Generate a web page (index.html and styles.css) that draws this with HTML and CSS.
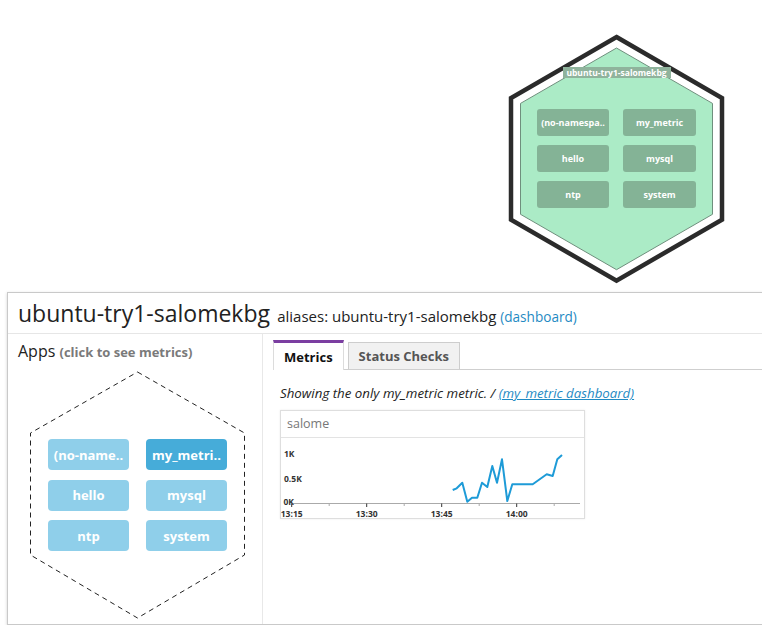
FILE: index.html
```html
<!DOCTYPE html>
<html>
<head>
<meta charset="utf-8">
<link rel="stylesheet" href="styles.css">
</head>
<body>
<div class="top">
  <div class="host">
    <svg class="host-bg" width="217" height="250" viewBox="0 0 217 250">
      <polygon points="108.5,3 214,64 214,185.7 108.5,246.6 3,185.7 3,64" fill="none" stroke="#2b2b2b" stroke-width="4.5"/>
      <polygon points="108.5,14 204.5,69.4 204.5,180.3 108.5,235.7 12.5,180.3 12.5,69.4" fill="#abebc6" stroke="#6f8f7d" stroke-width="1" stroke-linejoin="round"/>
    </svg>
    <div class="host-label">ubuntu-try1-salomekbg</div>
    <div class="host-grid">
      <div class="host-app">(no-namespa..</div>
      <div class="host-app">my_metric</div>
      <div class="host-app">hello</div>
      <div class="host-app">mysql</div>
      <div class="host-app">ntp</div>
      <div class="host-app">system</div>
    </div>
  </div>
</div>

<div class="panel">
  <div class="panel-head">
    <span class="title">ubuntu-try1-salomekbg</span>
    <span class="aliases">aliases: ubuntu-try1-salomekbg <a class="link" href="#">(dashboard)</a></span>
  </div>
  <div class="panel-body">
    <div class="left">
      <div class="apps-title">Apps <span class="hint">(click to see metrics)</span></div>
      <div class="apps-hex">
        <svg class="apps-bg" width="217" height="250" viewBox="0 0 217 250">
          <polygon points="108.5,2 215.5,63 215.5,185 108.5,248 1.5,185 1.5,63" fill="none" stroke="#222" stroke-width="1" stroke-dasharray="5 4"/>
        </svg>
        <div class="apps-grid">
          <div class="app">(no-name..</div>
          <div class="app selected">my_metri..</div>
          <div class="app">hello</div>
          <div class="app">mysql</div>
          <div class="app">ntp</div>
          <div class="app">system</div>
        </div>
      </div>
    </div>
    <div class="right">
      <div class="tabs">
        <div class="tab active">Metrics</div>
        <div class="tab">Status Checks</div>
      </div>
      <div class="showing">Showing the only my_metric metric. / <a class="link underline" href="#">(my_metric dashboard)</a></div>
      <div class="card">
        <div class="card-head">salome</div>
        <svg class="chart" width="303" height="81" viewBox="281 437 303 81">
          <line x1="293" y1="502.5" x2="580" y2="502.5" stroke="#aaa" stroke-width="1"/>
          <g stroke="#333" stroke-width="1">
            <line x1="291.7" y1="502.5" x2="291.7" y2="506"/>
            <line x1="366.7" y1="502.5" x2="366.7" y2="506"/>
            <line x1="441.7" y1="502.5" x2="441.7" y2="506"/>
            <line x1="516.7" y1="502.5" x2="516.7" y2="506"/>
          </g>
          <g stroke="#aaa" stroke-width="1">
            <line x1="329.2" y1="502.5" x2="329.2" y2="505"/>
            <line x1="404.2" y1="502.5" x2="404.2" y2="505"/>
            <line x1="479.2" y1="502.5" x2="479.2" y2="505"/>
            <line x1="554.2" y1="502.5" x2="554.2" y2="505"/>
          </g>
          <g class="axis-text">
            <text x="284" y="455.5">1K</text>
            <text x="284" y="480.5">0.5K</text>
            <text x="283.5" y="504">0K</text>
            <text x="291.7" y="516" text-anchor="middle">13:15</text>
            <text x="366.7" y="516" text-anchor="middle">13:30</text>
            <text x="441.7" y="516" text-anchor="middle">13:45</text>
            <text x="516.7" y="516" text-anchor="middle">14:00</text>
          </g>
          <polyline fill="none" stroke="#1e9bd7" stroke-width="2" stroke-linejoin="round"
            points="452.7,489 456.7,487.3 462.3,481.7 467.3,500.7 472,496.7 477.3,496.7 482,481.7 487.3,486 492.3,465 497,481.7 502,458.3 507.3,500 512.3,483.3 532.7,483.3 546.7,473.3 552.7,475 557.3,458.3 562,454"/>
        </svg>
      </div>
    </div>
  </div>
</div>
</body>
</html>
```

FILE: styles.css
```css
html, body {
  margin: 0;
  padding: 0;
  background: #fff;
  overflow: hidden;
  font-family: "Open Sans", "DejaVu Sans", sans-serif;
  color: #222;
}

.top {
  height: 292px;
  padding-left: 508px;
  padding-top: 34px;
  box-sizing: border-box;
}

.host {
  position: relative;
  width: 217px;
  height: 250px;
  padding-top: 33px;
  box-sizing: border-box;
  display: flex;
  flex-direction: column;
  align-items: center;
}

.host-bg {
  position: absolute;
  left: 0;
  top: 0;
}

.host-label {
  position: relative;
  height: 11px;
  line-height: 11px;
  width: 108px;
  text-align: center;
  background: #8fb39c;
  color: #fff;
  font-size: 8.5px;
  font-weight: 700;
  white-space: nowrap;
  overflow: hidden;
}

.host-grid {
  position: relative;
  margin-top: 31px;
  display: grid;
  grid-template-columns: 72px 73px;
  grid-auto-rows: 27px;
  column-gap: 14px;
  row-gap: 9px;
}

.host-app {
  background: #84b396;
  border-radius: 3px;
  color: #fff;
  font-size: 9px;
  font-weight: 700;
  display: flex;
  align-items: center;
  justify-content: center;
  white-space: nowrap;
}

.panel {
  margin-left: 7px;
  width: 756px;
  height: 333px;
  border: 1px solid #c9c9c9;
  box-shadow: 0 1px 3px rgba(0, 0, 0, 0.18);
  box-sizing: border-box;
  display: flex;
  flex-direction: column;
}

.panel-head {
  height: 41px;
  box-sizing: border-box;
  border-bottom: 1px solid #e6e6e6;
  padding: 5px 0 0 10px;
  white-space: nowrap;
}

.title {
  font-size: 23px;
  line-height: 31px;
  color: #222;
}

.aliases {
  font-size: 15px;
  margin-left: 3px;
  color: #222;
}

.aliases .link {
  font-size: 13.6px;
}

.link {
  color: #1f8ac3;
  text-decoration: none;
}

.link.underline {
  text-decoration: underline;
}

.panel-body {
  flex: 1;
  display: flex;
}

.left {
  width: 255px;
  box-sizing: border-box;
  border-right: 1px solid #e8e8e8;
  padding: 7px 0 0 10px;
}

.apps-title {
  font-size: 16px;
  line-height: 21px;
  color: #222;
  white-space: nowrap;
}

.hint {
  font-size: 13px;
  font-weight: 700;
  color: #7a7a7a;
}

.apps-hex {
  position: relative;
  width: 217px;
  height: 250px;
  margin: 7px 0 0 11px;
  padding-top: 69px;
  padding-left: 19px;
  box-sizing: border-box;
}

.apps-bg {
  position: absolute;
  left: 0;
  top: 0;
}

.apps-grid {
  position: relative;
  display: grid;
  grid-template-columns: 81px 81px;
  grid-auto-rows: 31px;
  column-gap: 17px;
  row-gap: 9.5px;
}

.app {
  background: #8fcfea;
  border-radius: 4px;
  color: #fff;
  font-size: 13px;
  font-weight: 700;
  display: flex;
  align-items: center;
  justify-content: center;
  white-space: nowrap;
}

.app.selected {
  background: #46acd9;
}

.right {
  flex: 1;
  padding-top: 6px;
}

.tabs {
  display: flex;
  align-items: flex-end;
  margin-left: 10px;
  border-bottom: 1px solid #cfcfcf;
  height: 30px;
  box-sizing: border-box;
}

.tab {
  font-size: 13px;
  font-weight: 700;
  box-sizing: border-box;
  display: flex;
  align-items: center;
}

.tab.active {
  height: 30px;
  padding: 0 10px 0 10px;
  border-top: 3px solid #7b3ea1;
  border-left: 1px solid #dcdcdc;
  border-right: 1px solid #dcdcdc;
  background: #fff;
  color: #111;
  margin-bottom: -1px;
}

.tab:not(.active) {
  height: 27px;
  margin-left: 4px;
  padding: 0 10px;
  background: #f1f1f1;
  border: 1px solid #cdcdcd;
  border-bottom: none;
  color: #555;
}

.showing {
  margin: 15px 0 0 17px;
  font-size: 13.3px;
  line-height: 17px;
  font-style: italic;
  color: #222;
  white-space: nowrap;
}

.card {
  margin: 8px 0 0 17px;
  width: 305px;
  height: 109px;
  border: 1px solid #dedede;
  box-shadow: 0 0 2px rgba(0, 0, 0, 0.08);
  box-sizing: border-box;
}

.card-head {
  height: 27px;
  box-sizing: border-box;
  border-bottom: 1px solid #e3e3e3;
  padding-left: 6px;
  font-size: 12.5px;
  line-height: 25px;
  color: #777;
}

.chart {
  display: block;
}

.axis-text text {
  font-family: "Open Sans", "DejaVu Sans", sans-serif;
  font-size: 8.5px;
  font-weight: 700;
  fill: #333;
}
```
